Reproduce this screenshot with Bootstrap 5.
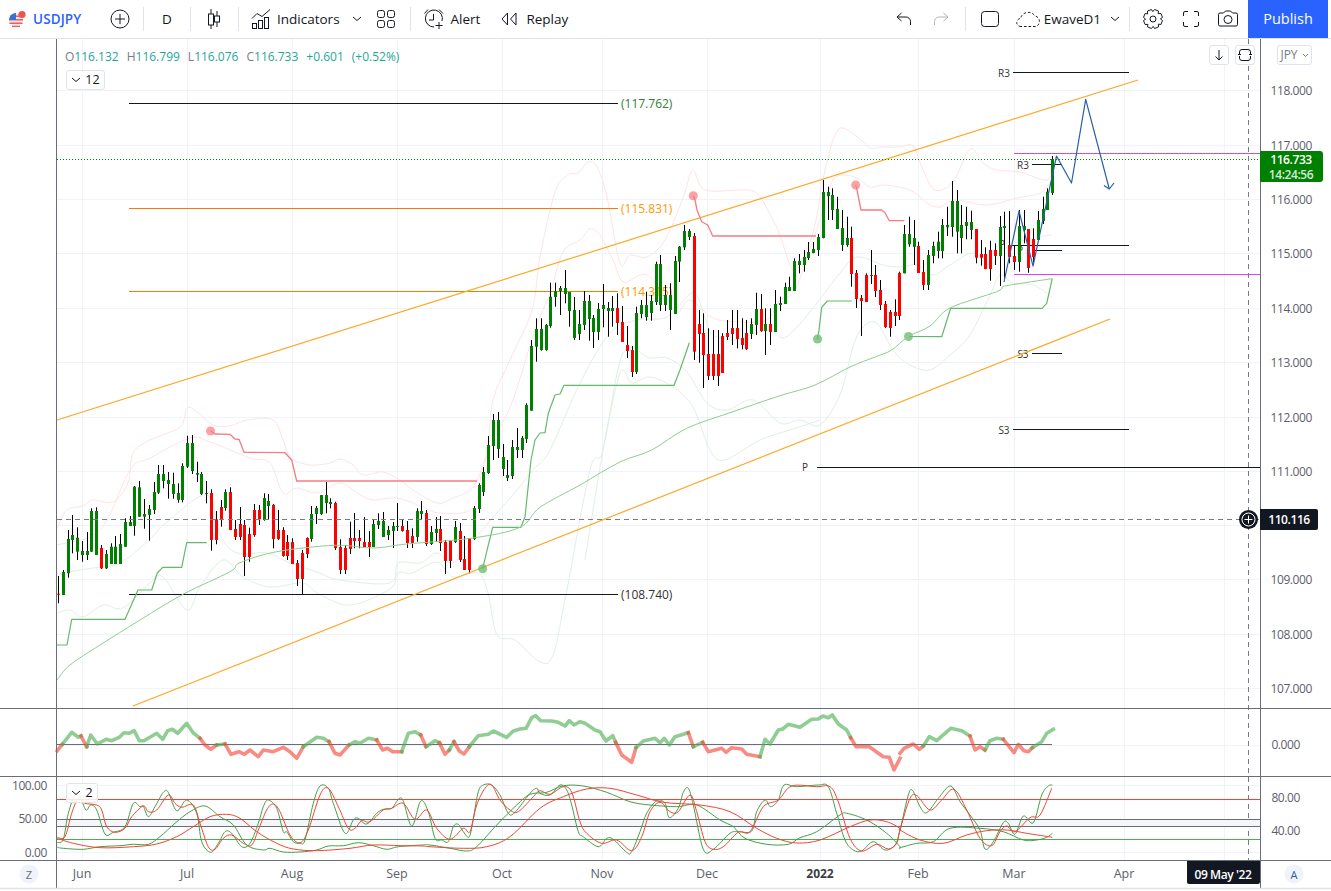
<!DOCTYPE html>
<html lang="en">
<head>
<meta charset="utf-8">
<title>USDJPY</title>
<link href="https://cdn.jsdelivr.net/npm/bootstrap@5.3.0/dist/css/bootstrap.min.css" rel="stylesheet">
<style>
html,body{margin:0;background:#fff;overflow:hidden}
body{font-family:"Open Sans","Liberation Sans",sans-serif;color:#131722}
.tv-top{height:39px;border-bottom:1px solid #e0e3eb}
.tv-top svg{display:block;fill:none;stroke:#131722;stroke-width:1}
.tv-top svg.ic-flag{stroke:none}
.tv-top svg.ic-dim{stroke:#b2b5be}
.tv-it{font-size:13.5px;line-height:38px;height:38px;white-space:nowrap}
.tv-sep{width:1px;height:24px;background:#e0e3eb;flex:none}
.tv-sym{color:#2962ff;font-weight:600;font-size:13.5px;margin-left:6px;width:50px;letter-spacing:.1px}
.tv-box{width:24px;justify-content:center;flex:none}
.tv-narrow{width:18px}
.ml-b{margin-left:11px}.ml-c{margin-left:12px}.ml-d{margin-left:13px}.ml-e{margin-left:5px}
.ml-f{margin-left:21px}.ml-h{margin-left:5px}.ml-i{margin-left:14px}.ml-j{margin-left:25px}.ml-k{margin-left:6px}.ml-l{margin-left:8px}.ml-m{margin-left:3px}
.tv-pub{width:80px;height:38px;margin-left:8px;margin-right:3px;background:#2962ff;color:#fff;border:0;border-radius:0;font-size:14.5px;font-weight:500;padding:0;line-height:38px}
.tv-pub:hover{background:#2962ff;color:#fff}
.tv-canvas{height:852px}
.tv-canvas svg{display:block}
.tv-legend{left:65px;top:10px;font-size:12px;line-height:16px;color:#26a69a;white-space:nowrap}
.tv-legend b{font-weight:400;color:#787b86}
.tv-mini{height:20px;background:rgba(255,255,255,.85);border:1px solid #e0e3eb;border-radius:3px;font-size:12.5px;line-height:18px;color:#131722;padding:0}
.tv-m1{left:66px;top:31px;width:39px}
.tv-m2{left:66px;top:744px;width:32px}
.tv-m3{left:1209px;top:6px;width:20px}
.tv-m4{left:1235px;top:6px;width:20px}
.tv-m5{left:1277px;top:6px;width:35px;color:#787b86;font-size:12px}
.tv-mini svg{fill:none;stroke:#131722;stroke-width:1}
.tv-m5 svg{stroke:#787b86}
.ax{letter-spacing:-.4px}
</style>
</head>
<body>
<header class="tv-top d-flex align-items-center">
  <div class="d-flex align-items-center ms-2">
    <svg class="ic-flag" width="19" height="20" viewBox="0 0 19 20">
      <circle cx="8" cy="11" r="7" fill="#e8e8ee"/>
      <path d="M2 6.5h12v1.5H2zM1 10h14v1.5H1zM1.4 13.5h13.2V15H1.4zM4 16.7h8V18H4z" fill="#f0605a"/>
      <path d="M1 11a7 7 0 0 1 7-7v7z" fill="#3d6fd8"/>
      <circle cx="14" cy="5.500" r="3.600" fill="#ef5350"/>
    </svg>
  </div>
  <div class="tv-it tv-sym">USDJPY</div>
  <div class="tv-box d-flex ml-j"><svg width="20" height="20"><circle cx="10" cy="10" r="9"/><path d="M10 5v10M5 10h10"/></svg></div>
  <div class="tv-sep ml-b"></div>
  <div class="tv-it tv-box d-flex ml-b">D</div>
  <div class="tv-sep ml-b"></div>
  <div class="tv-box d-flex ml-b"><svg width="16" height="22"><path d="M5 1v5M5 17v4M11 3v5M11 14v5"/><rect x="2.500" y="6" width="5" height="11"/><rect x="8.500" y="8" width="5" height="6"/></svg></div>
  <div class="tv-sep ml-c"></div>
  <div class="d-flex align-items-center ml-c">
    <svg width="22" height="20"><path d="M1 9.500l5-5 5 3 8-7"/><rect x="1.500" y="14.500" width="4" height="5"/><rect x="7.500" y="11.500" width="4" height="8"/><rect x="13.500" y="8.500" width="4" height="11"/></svg>
    <div class="tv-it ms-1">Indicators</div>
  </div>
  <div class="tv-box d-flex ml-h"><svg width="10" height="6"><path d="M1 1l4 3.500L9 1"/></svg></div>
  <div class="tv-box d-flex ml-h"><svg width="20" height="20"><rect x="1.500" y="1.500" width="7" height="7" rx="2"/><rect x="11.500" y="1.500" width="7" height="7" rx="2"/><rect x="1.500" y="11.500" width="7" height="7" rx="2"/><rect x="11.500" y="11.500" width="7" height="7" rx="2"/></svg></div>
  <div class="tv-sep ml-c"></div>
  <div class="d-flex align-items-center ml-c">
    <svg width="22" height="22"><path d="M11 19a8.500 8.500 0 1 1 8-6M10.500 6v6H6M1.500 5.500l3.500-4M16 1.500l4 4M16 14v7M12.500 17.500h7"/></svg>
    <div class="tv-it ml-k">Alert</div>
  </div>
  <div class="d-flex align-items-center ml-f">
    <svg width="17" height="14"><path d="M6.500 1L1 7l5.500 6zM15 1L9.500 7l5.500 6zM6.500 1v12"/></svg>
    <div class="tv-it ml-l">Replay</div>
  </div>
  <div class="flex-grow-1"></div>
  <div class="tv-box d-flex"><svg width="16" height="14"><path d="M5.500 1L1 5l4.500 4M1.500 5H10a4.500 4.500 0 0 1 4.500 4.500V13"/></svg></div>
  <div class="tv-box d-flex ml-d"><svg class="ic-dim" width="16" height="14"><path d="M10.500 1L15 5l-4.500 4M14.500 5H6a4.500 4.500 0 0 0-4.500 4.500V13"/></svg></div>
  <div class="tv-sep ml-c"></div>
  <div class="tv-box d-flex ml-c"><svg width="20" height="18"><rect x="1.500" y="1.500" width="17" height="15" rx="3"/></svg></div>
  <div class="d-flex align-items-center ml-i">
    <svg width="25" height="18"><path stroke-dasharray="2.500 2" d="M5 16.500a4 4 0 0 1-.5-8A8 8 0 0 1 19 6a5.500 5.500 0 0 1 1 10.500z"/></svg>
    <div class="tv-it ml-m">EwaveD1</div>
  </div>
  <div class="tv-box tv-narrow d-flex ml-e"><svg width="10" height="6"><path d="M1 1l4 3.500L9 1"/></svg></div>
  <div class="tv-sep ml-h"></div>
  <div class="tv-box d-flex ml-b"><svg width="22" height="22"><path id="gear" stroke-linejoin="round"/><circle cx="11" cy="11" r="3"/></svg></div>
  <div class="tv-box d-flex ml-i"><svg width="18" height="18"><path d="M6 1.500H3A1.500 1.500 0 0 0 1.500 3v3M12 1.500h3A1.500 1.500 0 0 1 16.500 3v3M6 16.500H3A1.500 1.500 0 0 1 1.500 15v-3M12 16.500h3a1.500 1.500 0 0 0 1.500-1.500v-3"/></svg></div>
  <div class="tv-box d-flex ml-d"><svg width="22" height="18"><path d="M1.500 4.500a1.500 1.500 0 0 1 1.500-1.500h3.500l2-2h5l2 2H19a1.500 1.500 0 0 1 1.500 1.500v10A1.500 1.500 0 0 1 19 16H3a1.500 1.500 0 0 1-1.500-1.500z"/><circle cx="11" cy="9.500" r="4"/></svg></div>
  <button class="btn tv-pub">Publish</button>
</header>
<main class="tv-canvas position-relative">
  <svg id="cv" width="1331" height="852" viewBox="0 39 1331 852" xmlns="http://www.w3.org/2000/svg"></svg>
  <div class="tv-legend position-absolute d-flex gap-2"><span><b>O</b>116.132</span><span><b>H</b>116.799</span><span><b>L</b>116.076</span><span><b>C</b>116.733</span><span>+0.601</span><span>(+0.52%)</span></div>
  <button class="btn tv-mini tv-m1 position-absolute d-flex align-items-center justify-content-center gap-1"><svg width="10" height="6"><path d="M1 1l4 3.500L9 1"/></svg>12</button>
  <button class="btn tv-mini tv-m2 position-absolute d-flex align-items-center justify-content-center gap-1"><svg width="10" height="6"><path d="M1 1l4 3.500L9 1"/></svg>2</button>
  <button class="btn tv-mini tv-m3 position-absolute d-flex align-items-center justify-content-center"><svg width="10" height="12"><path d="M5 1v10M1.500 7.500L5 11l3.500-3.500"/></svg></button>
  <button class="btn tv-mini tv-m4 position-absolute d-flex align-items-center justify-content-center"><svg width="14" height="14"><path d="M1.500 6V4a2.500 2.500 0 0 1 2.500-2.500h6A2.500 2.500 0 0 1 12.500 4v2M1.500 8v2A2.500 2.500 0 0 0 4 12.500h6a2.500 2.500 0 0 0 2.500-2.500V8M0 6.500h3M11 6.500h3"/></svg></button>
  <button class="btn tv-mini tv-m5 position-absolute d-flex align-items-center justify-content-center gap-1">JPY<svg width="7" height="5"><path d="M1 1l2.500 2.500L6 1"/></svg></button>
</main>
<script src="https://cdn.jsdelivr.net/npm/bootstrap@5.3.0/dist/js/bootstrap.bundle.min.js"></script>
<script>
(function(){
var o=[],SM=false;
function P(a){return a.map(function(p){return p[0]+','+p[1]}).join(' ')}
function smooth(a){
  var d='M'+a[0][0]+' '+a[0][1];
  for(var i=0;i<a.length-1;i++){
    var p0=a[i-1]||a[i],p1=a[i],p2=a[i+1],p3=a[i+2]||p2;
    var c1x=p1[0]+(p2[0]-p0[0])/6,c1y=p1[1]+(p2[1]-p0[1])/6,c2x=p2[0]-(p3[0]-p1[0])/6,c2y=p2[1]-(p3[1]-p1[1])/6;
    d+='C'+c1x.toFixed(1)+' '+c1y.toFixed(1)+' '+c2x.toFixed(1)+' '+c2y.toFixed(1)+' '+p2[0]+' '+p2[1];
  }
  return d;
}
function pl(a,c,w,op,extra){
  var at=' stroke="'+c+'" stroke-width="'+(w||1)+'"'+(op?' stroke-opacity="'+op+'"':'')+' stroke-linejoin="round" '+(extra||'')+'/>';
  if(SM)o.push('<path fill="none" d="'+smooth(a)+'"'+at);
  else o.push('<polyline fill="none" points="'+P(a)+'"'+at);
}
function ln(x1,y1,x2,y2,c,w,extra){o.push('<line x1="'+x1+'" y1="'+y1+'" x2="'+x2+'" y2="'+y2+'" stroke="'+c+'" stroke-width="'+(w||1)+'" '+(extra||'')+'/>')}
function tx(x,y,s,c,fs,anchor,weight,cls){o.push('<text'+(cls?' class="'+cls+'"':'')+' x="'+x+'" y="'+y+'" fill="'+c+'" font-size="'+(fs||12)+'" text-anchor="'+(anchor||'start')+'" dominant-baseline="central" font-family="Open Sans,Liberation Sans,sans-serif"'+(weight?' font-weight="'+weight+'"':'')+'>'+s+'</text>')}
function rc(x,y,w,h,c,extra){o.push('<rect x="'+x+'" y="'+y+'" width="'+w+'" height="'+h+'" fill="'+c+'" '+(extra||'')+'/>')}
function cr(x,y,r,c,extra){o.push('<circle cx="'+x+'" cy="'+y+'" r="'+r+'" fill="'+c+'" '+(extra||'')+'/>')}
function Z(a,ox,oy){return a.map(function(p){return [+(ox+p[0]/3).toFixed(1),+(oy+p[1]/3).toFixed(1)]})}

/* grid */
var GR='#f0f3fa';
[82,187.5,292.5,397.5,502.5,602.5,707.5,820.5,918,1014.5,1124.5,1224.5].forEach(function(x){
  x=Math.floor(x)+.5;ln(x,39,x,708,GR);ln(x,709,x,776,GR);ln(x,777,x,860,GR)});
[90,145,199,253,308,362,417,471,525,579,634,688].forEach(function(y){ln(57,y+.5,1260,y+.5,GR)});
ln(57,745.5,1260,745.5,GR);ln(57,785.5,1260,785.5,GR);ln(57,852.5,1260,852.5,GR);

/* bands */
var PK='#ffe3e3',GL='#e1f0e2';
SM=true;
pl([[57,528],[67,510],[83,506],[93,500],[113,502],[128,483],[133,453],[150,440],[180,427],[187,408],[197,412],[213,425],[230,426],[247,420],[273,420],[283,440],[291,458],[310,465],[330,463],[340,459],[353,465],[363,475],[383,472],[400,480],[413,490],[437,503],[453,498],[473,487],[487,450],[493,400],[510,360],[532,310],[540,257],[555,192],[568,175],[578,173],[588,162],[597,167],[607,197],[620,263],[630,255],[647,257],[665,240],[683,198],[693,170],[705,190],[747,190],[760,197],[773,220],[780,235],[790,265],[797,267],[813,233],[825,170],[838,130],[855,135],[870,148],[880,147],[900,147],[913,146],[923,170],[935,190],[953,182],[970,149],[983,163],[997,170],[1020,172],[1047,180],[1054,165]],PK);
pl([[57,545],[100,530],[130,470],[150,458],[190,438],[210,442],[250,458],[270,463],[283,493],[297,488],[317,493],[340,483],[357,493],[373,500],[397,498],[423,507],[440,513],[473,508],[483,467],[497,433],[513,400],[535,330],[550,293],[563,252],[580,240],[590,229],[600,235],[613,260],[623,282],[640,275],[650,277],[665,295],[677,313],[690,300],[713,318],[740,322],[767,320],[780,300],[795,290],[813,240],[825,205],[833,180],[843,175],[857,178],[870,187],[885,185],[910,190],[927,203],[940,207],[955,200],[987,205],[1017,198],[1040,193],[1052,180]],PK);
pl([[57,590],[58,575],[80,570],[100,567],[120,563],[147,542],[167,522],[207,495],[220,535],[237,553],[267,553],[290,563],[317,572],[340,580],[390,583],[398,563],[420,563],[437,553],[453,563],[473,540],[497,513],[517,490],[533,470],[550,450],[580,383],[610,333],[637,320],[667,317],[693,293],[705,318],[713,335],[735,340],[750,335],[770,330],[783,338],[797,327],[817,303],[840,273],[857,257],[883,265],[900,267],[917,265],[933,275],[950,265],[973,253],[990,265],[1010,245],[1040,237],[1052,235]],GL);
pl([[57,613],[70,610],[83,617],[103,605],[123,608],[150,583],[163,577],[187,610],[200,587],[223,560],[243,577],[270,587],[303,583],[317,593],[350,605],[390,589],[398,573],[412,573],[437,562],[453,577],[478,573],[488,593],[497,635],[515,640],[540,662],[553,655],[565,600],[590,470],[603,450],[623,353],[650,358],[667,358],[687,372],[707,403],[727,410],[753,400],[780,423],[800,420],[820,425],[840,395],[853,347],[863,327],[877,323],[893,350],[910,365],[930,370],[950,355],[970,335],[990,295],[1000,275],[1013,283],[1033,285],[1052,297]],GL);
pl([[585,560],[603,450],[617,383],[623,370],[632,383],[650,377],[673,387],[693,407],[710,450],[725,460],[760,440],[790,430],[820,420]],GL);
SM=false;

/* level lines + labels */
ln(129,103.5,618,103.5,'#131722');tx(621,103,'(117.762)','#2e7d32',12);
ln(129,208.5,618,208.5,'#f57c00');tx(621,208,'(115.831)','#ff9800',12);
ln(129,291.5,618,291.5,'#f57c00');tx(621,291,'(114.315)','#ff9800',12);
ln(129,594.5,618,594.5,'#131722');tx(621,594,'(108.740)','#333',12);
ln(1013,72.5,1129,72.5,'#131722');tx(1004,73,'R3','#333',10,'middle');
ln(1032,164.5,1062,164.5,'#131722');tx(1023,165,'R3','#333',10,'middle');
ln(1012,245.5,1129,245.5,'#131722');tx(1002,244,'P','#333',10,'middle');
ln(1032,250.5,1062,250.5,'#131722');tx(1020,250,'P','#333',10,'middle');
ln(1032,353.5,1062,353.5,'#131722');tx(1023,354,'S3','#333',10,'middle');
ln(1013,429.5,1129,429.5,'#131722');tx(1004,430,'S3','#333',10,'middle');
ln(817,467.5,1260,467.5,'#131722');tx(805,467,'P','#333',10,'middle');

/* candles: [wickTop,bodyTop,bodyBottom,wickBottom,colour] */
var S=[
{ox:420,s:0,d:"468,521,524,550,r 450,456,525,525,g 330,357,460,473,g 285,345,360,400,g 322,353,395,420,g 363,393,405,425,g 336,393,405,420,g 265,273,395,395,g 262,273,405,405,g 375,384,445,447,r 390,402,445,447,g 370,380,432,432,g 348,380,432,432,g 342,372,432,432,g 295,306,380,380,g 288,306,318,318,g 198,200,318,347,g 183,202,290,290,g 237,282,290,326,g 255,267,285,362,g 186,216,270,282,g 135,162,218,222,g 135,162,183,205,g 156,180,192,236,g 158,192,222,236,g 190,219,240,248,g 130,138,240,247,g 47,69,140,144,g 45,69,153,162,g 125,159,164,186,g 156,162,222,225,g 183,219,222,250,g 208,219,360,392,r 273,298,360,373,r 240,261,300,320,r 208,216,264,272,g 202,216,330,330,r 300,327,351,360,r 261,312,351,360,r 300,315,411,468,r 323,342,411,425,r 252,270,345,350,r 255,270,298,315,r 220,234,300,302,g 222,243,258,298,g 252,255,357,385,r 270,330,357,360,r 322,330,408,410,r 345,366,408,420,r 355,366,432,432,r 420,429,477,498,r 390,399,477,523,r 352,354,402,414,r 258,282,357,365,g 258,264,282,312,g 225,225,282,285,g 186,225,249,280,g 235,246,252,265,g 245,249,384,390,r 358,381,450,462,r 375,384,450,462,r 305,354,387,402,r"},
{ox:400,s:62,d:"339,414,423,445,r 390,414,423,445,r 351,426,441,441,r 393,426,441,471,r 357,372,441,441,g 340,363,375,387,g 336,363,411,411,g 378,390,405,420,g 366,378,393,444,g 309,378,381,393,g 360,378,393,395,r 363,390,429,444,r 385,408,429,444,r 325,333,411,425,g 303,333,342,357,g 330,339,432,438,r 378,396,432,435,g 351,387,399,425,g 348,387,429,453,r 420,426,483,522,r 420,423,483,504,r 363,381,426,429,g 369,393,480,486,r 408,477,510,510,r 414,414,510,520,r 318,324,417,420,g 250,255,327,339,g 201,216,276,288,g 108,135,219,222,g 42,60,138,180,g 36,60,147,174,g 132,171,207,228,g 180,225,234,243,g 120,141,228,237,g 84,141,150,174,g 108,114,150,174,g 10,15,117,129,g"},
{ox:250,s:99,d:"270,288,482,482,g 205,237,290,335,g 205,237,300,302,g 222,225,300,302,g 98,140,228,233,g 98,123,141,170,g 108,114,123,195,g 60,114,132,160,g 126,126,183,230,g 141,180,264,270,g 180,222,252,270,g 123,153,225,240,g 135,153,207,272,g 195,204,246,294,g 159,177,246,270,g 102,165,177,232,g 156,174,183,260,g 138,174,183,230,g 130,174,219,255,r 168,216,276,276,r 228,285,303,324,r 288,300,366,381,r 170,189,366,372,g 150,165,192,205,g 125,165,201,212,g 135,153,189,212,g 35,42,156,165,g 15,42,165,183,g 105,135,165,183,g 100,135,180,240,g 18,33,192,192,g -12,-10,35,96,g -75,-57,-8,0,g -63,-57,-39,-30,g -51,-42,305,330,r 180,222,252,338,r 190,249,315,414,r 235,312,378,390,r 240,312,378,390,r 240,312,378,408,r 250,258,369,369,r 210,249,261,270,r 180,234,252,285,r 180,234,267,295,r 205,264,285,298,r 210,249,297,300,r 205,222,252,267,g 128,177,225,255,g 132,177,243,245,r 175,222,243,315,g 175,222,246,285,r"},
{ox:170,s:150,d:"360,402,486,486,g 380,399,405,423,g 338,351,402,402,g 320,351,363,363,g 265,273,363,363,g 252,273,285,310,g 240,261,285,305,g 216,246,264,270,g 216,237,249,250,g 192,201,240,258,g 30,66,204,205,g 50,66,78,150,g 55,75,120,150,g 80,117,177,177,g 120,174,225,243,g 140,204,225,230,g 170,204,312,350,r 300,309,387,414,r 375,384,393,498,r 310,315,396,396,r 240,315,318,342,r 285,315,363,381,r 330,360,405,420,r 393,402,471,474,r 420,426,474,500,r 388,426,438,468,r 305,309,438,450,r"},
{ox:150,s:177,d:"225,252,370,370,g 200,252,283,290,g 210,264,291,345,g 275,288,369,369,r 330,366,405,420,r 300,315,405,420,g 275,288,318,340,g 245,275,303,325,g 207,225,303,325,g 170,225,232,258,g 93,153,231,260,g 120,153,245,310,g 165,225,264,310,g 170,216,228,268,g 182,216,240,268,g 237,237,323,340,r 270,312,323,347,r 292,312,357,358,r 272,300,357,392,r 280,300,318,345,r 198,231,318,408,g 185,228,234,385,g 183,285,321,340,r 285,318,336,360,r 180,228,336,365,g 180,228,240,280,g 237,237,354,368,r 235,267,321,345,r 183,210,270,270,g 140,177,213,222,g 115,125,180,180,g 18,27,129,135,g"}
];
S.forEach(function(g){g.d.split(' ').forEach(function(t,k){
  var a=t.split(','),x=Math.round(58+4.78*(g.s+k));
  var f=function(v){return +(g.ox+v/3).toFixed(1)};
  var c=a[4]=='r'?'#ff0000':'#008000';
  o.push('<rect x="'+x+'" y="'+f(+a[0])+'" width="1" height="'+(f(+a[3])-f(+a[0])).toFixed(1)+'" fill="#000"/>');
  o.push('<rect x="'+(x-1)+'" y="'+f(+a[1])+'" width="3" height="'+Math.max(1,(f(+a[2])-f(+a[1]))).toFixed(1)+'" fill="'+c+'"/>');
})});

/* channels */
ln(57,420,1138,80,'#ffa726',1.2);ln(133,706,1110,319,'#ffa726',1.2);

/* horizontal price lines */
ln(1014,153.5,1260,153.5,'#c94fdc',1);ln(1014,274.5,1260,274.5,'#e040fb',1);

/* blue wave */
pl([[1004,282],[1019,211],[1033,266],[1056.500,156],[1071.500,183],[1085.700,99.300],[1109.300,189]],'#2a5ea8',1.2);
pl([[1104,185.500],[1109.300,189],[1114,183]],'#2a5ea8',1.2);

/* supertrend reds */
var RD='#f77c80',GN='#66b96a',DR='fill-opacity=".7"',DG='fill-opacity=".75"';
pl([[210.700,431],[215,434],[230,434.300],[235,439],[239,439.300],[244,452.300],[285,452.700],[291.700,460],[296.700,481],[477,481]],RD,1.3);cr(210.500,431,4.500,'#f77c80',DR);
pl([[693.300,195.700],[695,200],[697,210],[701.700,221.700],[707.700,225],[712.700,236],[816,236]],RD,1.3);cr(693.300,195.700,4.500,'#f77c80',DR);
pl([[855.700,185],[857,190],[861,210],[881.700,210],[885,212.700],[889.300,220.700],[904.300,220.700]],RD,1.3);cr(855.700,185,4.500,'#f77c80',DR);

/* supertrend greens */
pl([[57,645],[67,645],[71.700,619.300],[125,619.300],[130,608],[138,590],[151.700,590],[157.300,573],[162.700,567.300],[181.700,567.300],[186.700,542.700],[206.700,542.700]],GN,1.2);
pl([[482.700,568.700],[486.700,551.700],[492.700,527.300],[521,527.300],[525,516.700],[531,460],[535,440],[540,433],[545,432.700],[548.300,413.300],[555,395],[560,394],[564,385.300],[674,385.300],[680,370],[689.300,342.700]],GN,1.2);cr(482.700,568.700,4.500,'#66b96a',DG);
pl([[817.500,339],[819,330],[821.700,307.300],[827.300,301],[851.700,301]],GN,1.2);cr(817.500,339,4.500,'#66b96a',DG);
pl([[908.500,336.500],[941.700,336.700],[950.700,308.300],[1042,308.300],[1046.700,303.300],[1052.300,278.300]],GN,1.2);cr(908.500,336.500,4.500,'#66b96a',DG);
/* MA */
SM=true;
pl([[57,680],[70,665],[100,645],[140,620],[183,594.300],[230,571.700],[240,562.700],[276.700,551.700],[335,545.300],[373,548],[406.700,544],[473,538],[520,527.300],[540,507.300],[580,485],[620,462],[651.700,450],[686.700,428.300],[733,411.700],[780,395.700],[815,385],[850,367],[875,357],[891.700,350],[908,336.700],[930,326],[950,308],[996.700,291.700],[1003,286.700],[1016.700,284],[1051.700,278.700]],'#8ccf8f',1);
SM=false;

/* price lines */
ln(57,159.5,1260,159.5,'#008000',1,'stroke-dasharray="1 2"');
ln(57,519.5,1260,519.5,'#787b86',1,'stroke-dasharray="5 4"');
ln(1248.5,39,1248.5,860,'#787b86',1,'stroke-dasharray="5 4"');

/* oscillator pane */
ln(57,744.5,1052,744.5,'#6a6d78',1.2);
var G1='#4caf50',R1='#f44336';
function osc(c,a,ox,oy){pl(Z(a,ox,oy),c,3.6,'.62','stroke-linecap="square"')}
var Y4=700;
osc(R1,[[172,152],[187,133]],0,Y4);
osc(G1,[[187,133],[215,97],[235,112],[243,108]],0,Y4);
osc(R1,[[243,108],[260,140]],0,Y4);
osc(G1,[[260,140],[272,105],[292,132],[318,118],[335,122],[358,112],[372,98],[387,100],[403,92],[418,122],[432,122],[470,100],[488,118],[503,92],[517,88],[533,100],[560,70],[578,97],[600,115]],0,Y4);
osc(R1,[[600,115],[615,135],[632,148],[650,135]],0,Y4);
osc(G1,[[650,135],[675,132]],0,Y4);
osc(R1,[[675,132],[693,163],[717,155],[733,163],[750,150],[775,170],[790,150],[820,155],[850,142],[870,155],[890,175],[910,140]],0,Y4);
osc(G1,[[910,140],[950,112],[970,115],[987,125]],0,Y4);
osc(R1,[[987,125],[1005,160],[1020,165],[1047,135]],0,Y4);
osc(G1,[[1047,135],[1065,125],[1080,130],[1105,115],[1130,120]],0,Y4);
osc(R1,[[1130,120],[1148,150],[1162,145],[1178,155],[1205,155]],0,Y4);
osc(G1,[[1205,155],[1225,100],[1245,95],[1262,105]],0,Y4);
osc(R1,[[1262,105],[1278,140]],0,Y4);
osc(G1,[[1278,140],[1305,122],[1320,130]],0,Y4);
var Y1=705,X1=430;
osc(R1,[[28,113],[45,148],[58,135]],X1,Y1);
osc(G1,[[58,135],[72,110]],X1,Y1);
osc(R1,[[72,110],[88,138],[102,147],[118,125]],X1,Y1);
osc(G1,[[118,125],[145,92],[175,88],[190,78],[230,97],[250,78],[270,72],[288,70],[305,38],[317,32],[332,47],[365,48],[385,52],[405,63],[418,47],[432,60],[450,50],[465,55],[495,75],[510,80],[528,108],[548,92],[557,112]],X1,Y1);
osc(R1,[[557,112],[575,150],[605,172],[618,128]],X1,Y1);
osc(G1,[[618,128],[640,108],[675,100],[690,113],[703,100],[718,120],[735,95],[775,83]],X1,Y1);
osc(R1,[[775,83],[790,125]],X1,Y1);
osc(G1,[[790,125],[818,112]],X1,Y1);
osc(R1,[[818,112],[835,140],[875,130],[888,142],[905,128],[935,132],[950,148],[990,155]],X1,Y1);
osc(G1,[[990,155],[1005,103],[1020,117],[1045,75],[1058,72],[1075,58],[1110,67],[1145,43],[1165,42],[1178,33],[1195,38],[1207,30],[1225,57],[1250,75],[1262,98]],X1,Y1);
osc(R1,[[1262,98],[1278,125],[1318,125],[1360,155],[1378,157],[1392,195],[1410,160]],X1,Y1);
osc(R1,[[60,160],[72,145],[100,132],[118,148],[130,138]],880,Y4);
osc(G1,[[130,138],[148,110],[170,122],[212,85],[245,92],[270,108]],880,Y4);
osc(R1,[[270,108],[285,150],[300,140],[315,150]],880,Y4);
osc(G1,[[315,150],[330,122],[350,115],[370,118]],880,Y4);
osc(R1,[[370,118],[402,158],[415,133],[432,152],[445,155],[457,143]],880,Y4);
osc(G1,[[457,143],[485,125],[500,100],[520,88]],880,Y4);

/* stochastic pane */
rc(57,819.500,1203,7,'#f5f6f8');
ln(57,799.5,1260,799.5,'#f44336',1);
ln(57,819.5,1260,819.5,'#6a6d78',1);ln(57,826.5,1260,826.5,'#6a6d78',1);
ln(57,839.5,1260,839.5,'#4caf50',1);
var SG='#43a047',SR='#f44336';
function curve(c,a4,a11,a5){
 var a=Z(a4,0,700).concat(Z(a11,430,705),Z(a5,880,700));
 a.sort(function(p,q){return p[0]-q[0]});
 SM=true;pl(a,c,1);SM=false;
}
curve(SG,[[172,428],[190,418],[205,340],[225,285],[240,290],[258,330],[272,315],[290,330],[315,402],[340,397],[375,380],[400,310],[420,320],[430,318],[445,350],[465,320],[490,277],[505,277],[530,332],[560,300],[590,340],[605,425],[632,457],[655,430],[675,395],[695,400],[725,440],[750,430],[775,370],[790,320],[805,300],[830,325],[850,395],[860,395],[880,425],[900,430],[915,420],[940,310],[960,258],[985,265],[1000,310],[1035,400],[1060,360],[1075,355],[1100,372],[1130,340],[1150,328],[1175,325],[1205,295],[1235,378],[1262,303],[1285,335]],
[[15,400],[35,405],[55,410],[70,365],[85,358],[100,380],[118,395],[130,340],[145,260],[160,240],[185,240],[210,270],[235,325],[255,322],[300,265],[320,250],[330,265],[360,270],[390,240],[410,255],[425,300],[445,380],[460,395],[505,425],[530,400],[550,403],[590,442],[605,440],[630,380],[650,325],[680,287],[705,295],[718,338],[745,310],[760,262],[775,250],[790,300],[820,433],[850,433],[900,385],[925,380],[965,378],[980,320],[1005,285],[1022,305],[1045,285],[1062,240],[1100,245],[1165,240],[1195,245],[1220,325],[1245,405],[1270,435],[1295,438],[1330,410],[1365,435],[1395,420]],
[[60,390],[85,285],[98,272],[120,320],[140,338],[175,295],[212,258],[240,305],[270,345],[300,390],[315,447],[340,425],[370,368],[385,370],[405,403],[430,348],[460,368],[485,285],[505,258],[517,255]]);
curve(SR,[[172,412],[195,410],[215,340],[235,295],[255,310],[290,315],[305,330],[320,380],[345,397],[375,385],[395,350],[430,318],[445,335],[470,330],[505,285],[525,310],[545,322],[580,315],[600,370],[625,440],[645,448],[670,415],[695,405],[730,430],[755,435],[775,390],[800,330],[820,312],[840,335],[870,405],[900,428],[925,390],[960,285],[985,265],[1015,320],[1045,385],[1065,385],[1085,362],[1110,365],[1150,330],[1175,325],[1210,310],[1245,358],[1280,330]],
[[20,370],[60,403],[100,370],[120,380],[140,300],[165,250],[185,240],[210,285],[240,315],[265,320],[310,275],[330,257],[360,268],[400,245],[425,262],[450,350],[470,385],[515,415],[560,405],[605,437],[635,395],[660,320],[690,292],[720,320],[745,320],[780,270],[800,320],[825,410],[850,433],[880,425],[925,382],[960,380],[1000,305],[1045,285],[1085,243],[1160,245],[1200,245],[1225,290],[1260,400],[1295,438],[1340,418],[1375,432],[1400,415]],
[[60,390],[90,295],[112,288],[150,330],[185,300],[222,268],[260,330],[300,415],[335,437],[360,395],[380,378],[405,395],[450,353],[480,345],[515,265]]);
curve(SG,[[172,442],[190,445],[250,448],[300,440],[360,437],[400,433],[445,433],[480,410],[525,370],[570,335],[615,318],[660,350],[700,375],[740,435],[790,450],[810,445],[850,456],[900,456],[950,450],[985,438],[1030,437],[1075,428],[1120,437],[1160,448],[1195,440],[1265,435]],
[[0,420],[60,430],[110,438],[140,425],[200,360],[260,300],[300,268],[350,262],[400,242],[460,243],[530,262],[600,290],[660,300],[740,305],[800,300],[870,345],[910,365],[945,400],[1010,418],[1075,418],[1110,398],[1160,380],[1230,330],[1250,325],[1310,345],[1370,385],[1410,425]],
[[60,443],[110,430],[160,425],[210,385],[300,385],[370,395],[430,420],[470,420],[500,412],[517,400]]);
curve(SR,[[172,415],[220,430],[300,443],[400,440],[470,432],[530,410],[580,380],[630,350],[680,343],[720,355],[770,395],[830,430],[880,447],[950,452],[1050,445],[1120,435],[1200,437],[1265,438]],
[[0,425],[100,430],[170,425],[240,395],[330,310],[400,275],[470,252],[540,250],[620,270],[700,292],[810,300],[900,320],[980,370],[1040,400],[1100,414],[1170,405],[1260,365],[1320,345],[1370,350],[1410,370]],
[[60,390],[120,420],[190,430],[260,405],[320,392],[380,390],[440,400],[517,412]]);

/* structure lines */
var AX='#6a6d78';
ln(0,708.5,1331,708.5,AX);ln(0,776.5,1331,776.5,AX);ln(0,860.5,1331,860.5,AX);
ln(56.5,39,56.5,888,AX);ln(1260.5,39,1260.5,888,AX);
ln(0,888.5,1331,888.5,'#e0e3eb',1.500);

/* price axis */
var LB='#5d606b',FS=12;
[['118.000',90],['117.000',145],['116.000',199],['115.000',253],['114.000',308],['113.000',362],['112.000',417],['111.000',471],['109.000',579.500],['108.000',634],['107.000',688]].forEach(function(t){tx(1312,t[1],t[0],LB,FS,'end',null,'ax')});
tx(1300,744,'0.000',LB,FS,'end',null,'ax');tx(1300,797,'80.00',LB,FS,'end',null,'ax');tx(1300,830,'40.00',LB,FS,'end',null,'ax');
/* left scale */
tx(47,785,'100.00',LB,FS,'end',null,'ax');tx(47,818,'50.00',LB,FS,'end',null,'ax');tx(47,852,'0.00',LB,FS,'end',null,'ax');
/* price tag */
o.push('<path d="M1260 151h60a3 3 0 0 1 3 3v25a3 3 0 0 1-3 3h-60z" fill="#008000"/>');
tx(1291,159.500,'116.733','#fff',12,'middle',600,'ax');tx(1291,174,'14:24:56','#d8ead8',12,'middle',600,'ax');
/* crosshair tag */
o.push('<path d="M1260 509h56a2 2 0 0 1 2 2v17a2 2 0 0 1-2 2h-56z" fill="#131722"/>');
tx(1289,519.500,'110.116','#fff',12,'middle',600,'ax');
cr(1248.500,519.500,9.500,'#131722');
ln(1244.5,519.5,1252.5,519.5,'#fff');ln(1248.5,515.5,1248.5,523.5,'#fff');
o.push('<circle cx="1248.5" cy="519.5" r="6.500" fill="none" stroke="#fff"/>');
/* time axis */
[['Jun',82],['Jul',187],['Aug',292],['Sep',397],['Oct',502],['Nov',602],['Dec',707],['Feb',918],['Mar',1014],['Apr',1124]].forEach(function(t){tx(t[1],873,t[0],LB,12.5,'middle')});
tx(820,873,'2022','#3a3d46',12,'middle',700);
o.push('<path d="M1187 861h73v21a2 2 0 0 1-2 2h-69a2 2 0 0 1-2-2z" fill="#131722"/>');
tx(1223,874,'09 May \'22','#fff',12,'middle',600,'ax');
cr(29,874,9.500,'#f0f3fa');tx(29,874,'Z','#6a6d78',11,'middle');
cr(1294,874,9.500,'#f0f3fa');tx(1294,874,'A','#2a5ea8',11,'middle');

document.getElementById('cv').innerHTML=o.join('');

/* gear */
var pts=[],n=8;for(var i=0;i<n;i++){var b=i*2*Math.PI/n+Math.PI/8;
 [[-.22,9.6],[.22,9.6],[.36,7.4]].forEach(function(q,k){
   var a=b+q[0];var r=q[1];pts.push(((k||i)?'L':'M')+(11+r*Math.cos(a)).toFixed(1)+' '+(11+r*Math.sin(a)).toFixed(1))})}
document.getElementById('gear').setAttribute('d',pts.join('')+'Z');
})();
</script>
</body>
</html>
